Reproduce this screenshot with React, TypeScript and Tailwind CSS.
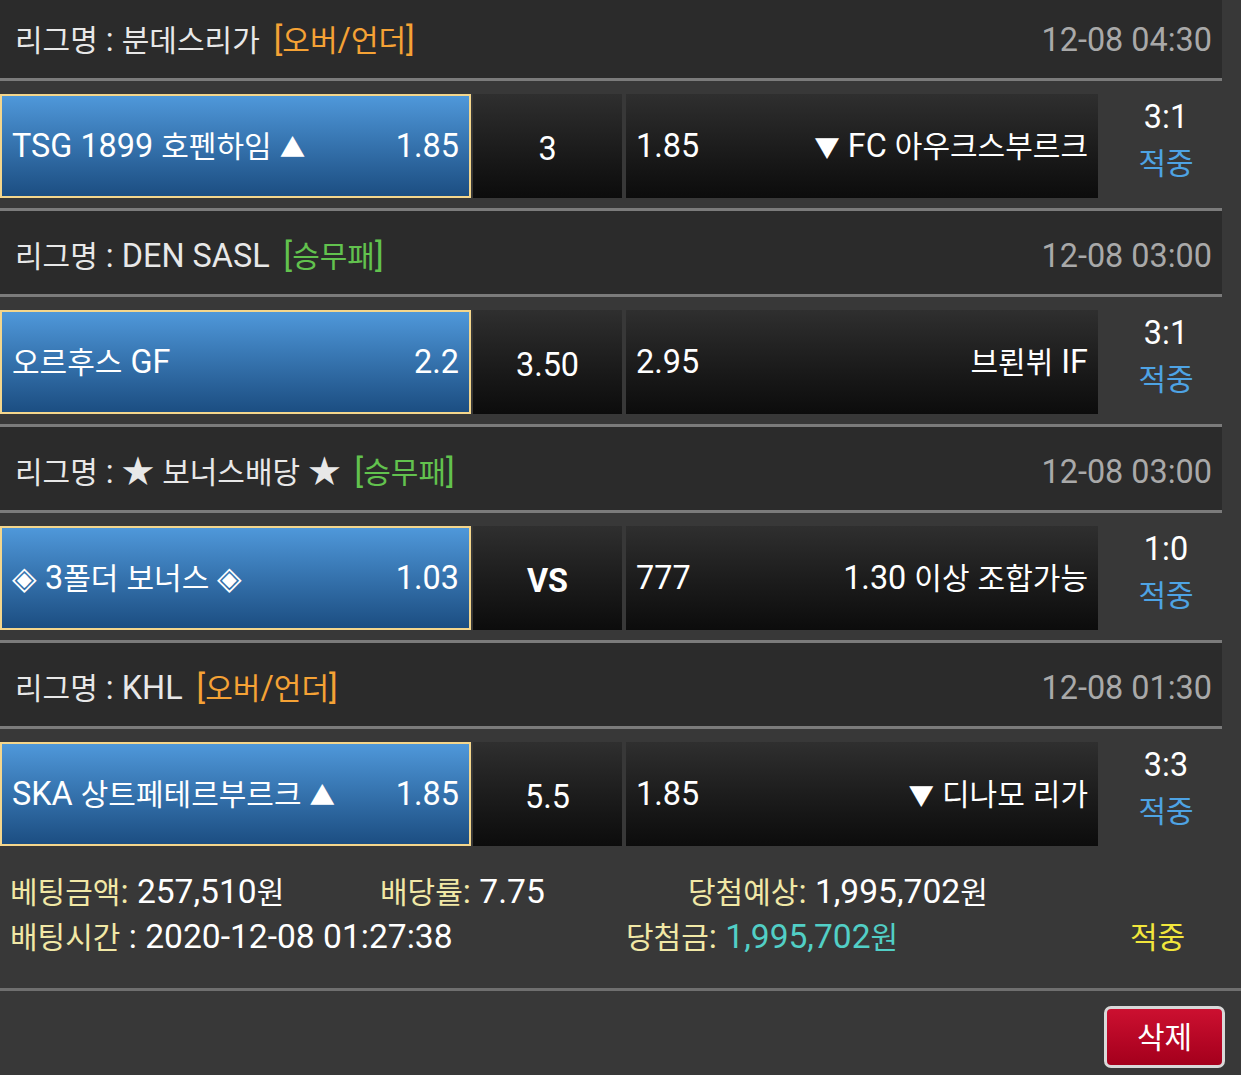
import React from 'react';

type Match = {
  league: string;
  tag: string;
  tagColor: 'orange' | 'green';
  time: string;
  home: string;
  homeOdds: string;
  center: string;
  centerBold?: boolean;
  awayOdds: string;
  away: string;
  score: string;
};

const MATCHES: Match[] = [
  {
    league: '분데스리가',
    tag: '[오버/언더]',
    tagColor: 'orange',
    time: '12-08 04:30',
    home: 'TSG 1899 호펜하임 ▲',
    homeOdds: '1.85',
    center: '3',
    awayOdds: '1.85',
    away: '▼ FC 아우크스부르크',
    score: '3:1',
  },
  {
    league: 'DEN SASL',
    tag: '[승무패]',
    tagColor: 'green',
    time: '12-08 03:00',
    home: '오르후스 GF',
    homeOdds: '2.2',
    center: '3.50',
    awayOdds: '2.95',
    away: '브뢴뷔 IF',
    score: '3:1',
  },
  {
    league: '★ 보너스배당 ★',
    tag: '[승무패]',
    tagColor: 'green',
    time: '12-08 03:00',
    home: '◈ 3폴더 보너스 ◈',
    homeOdds: '1.03',
    center: 'VS',
    centerBold: true,
    awayOdds: '777',
    away: '1.30 이상 조합가능',
    score: '1:0',
  },
  {
    league: 'KHL',
    tag: '[오버/언더]',
    tagColor: 'orange',
    time: '12-08 01:30',
    home: 'SKA 상트페테르부르크 ▲',
    homeOdds: '1.85',
    center: '5.5',
    awayOdds: '1.85',
    away: '▼ 디나모 리가',
    score: '3:3',
  },
];

const FONT = "font-['Roboto','Noto_Sans_CJK_KR',sans-serif]";

// latin runs are drawn a bit larger than hangul, as in the original screen
const T: React.FC<{ s: string; big?: boolean }> = ({ s, big }) => (
  <>
    {s.split(/([\uAC00-\uD7A3]+|[▲▼])/).map((part, i) => {
      if (!part) return null;
      if (/[\uAC00-\uD7A3]/.test(part)) return <span key={i}>{part}</span>;
      if (part === '▲' || part === '▼') return <span key={i} className="text-[0.85em]">{part}</span>;
      return (
        <span key={i} className={big ? 'text-[1.12em]' : 'text-[1.08em]'}>
          {part}
        </span>
      );
    })}
  </>
);

const MatchBlock: React.FC<{ m: Match; first: boolean }> = ({ m, first }) => (
  <div>
    {!first && <div className="h-[3px] w-[1222px] bg-[#7b7b7b]" />}
    <div
      className={
        'flex w-[1222px] items-center justify-between bg-[#2b2b2b] pl-[15px] pr-[10px] text-[30px] ' +
        (first ? 'h-[78px] pt-[2px]' : 'h-[83px] pt-[7px]')
      }
    >
      <div className="flex items-center text-[#e8e8e8]">
        <span>
          <T s={`리그명 :\u00a0${m.league}`} />
        </span>
        <span className={'ml-[14px] ' + (m.tagColor === 'orange' ? 'text-[#f5a235]' : 'text-[#62c24e]')}>
          <T s={m.tag} />
        </span>
      </div>
      <span className="text-[#a9a9a9]">
        <T s={m.time} />
      </span>
    </div>
    <div className="h-[3px] w-[1222px] bg-[#7b7b7b]" />
    <div className="flex pb-[10px] pt-[13px]">
      <div className="flex h-[104px] w-[471px] items-center justify-between border-2 border-[#f4d68c] bg-gradient-to-b from-[#4f98da] to-[#1c4e82] px-[10px] text-[30px] text-white">
        <span>
          <T s={m.home} />
        </span>
        <span>
          <T s={m.homeOdds} />
        </span>
      </div>
      <div
        className={
          'ml-[2px] flex h-[104px] w-[149px] items-center justify-center bg-gradient-to-b from-[#2f2f2f] to-[#0c0c0c] pt-[6px] text-[30px] text-white ' +
          (m.centerBold ? 'font-bold' : '')
        }
      >
        <T s={m.center} />
      </div>
      <div className="ml-[4px] flex h-[104px] w-[472px] items-center justify-between bg-gradient-to-b from-[#2f2f2f] to-[#0c0c0c] pl-[10px] pr-[10px] text-[30px] text-white">
        <span>
          <T s={m.awayOdds} />
        </span>
        <span>
          <T s={m.away} />
        </span>
      </div>
      <div className="flex w-[124px] flex-col items-center pl-[12px] text-[30px] leading-[46px]">
        <span className="text-white">
          <T s={m.score} />
        </span>
        <span className="text-[#4ea3e4]">적중</span>
      </div>
    </div>
  </div>
);

const App: React.FC = () => {
  return (
    <div className={'min-h-screen w-full bg-[#383838] ' + FONT}>
      {MATCHES.map((m, i) => (
        <MatchBlock key={i} m={m} first={i === 0} />
      ))}

      {/* betting summary */}
      <div className="pb-[28px] pt-[14px] text-[30px]">
        <div className="flex h-[45px] items-center">
          <div className="w-[380px] pl-[10px]">
            <span className="text-[#f1e8a6]">
              <T s="베팅금액:" big />
            </span>
            <span className="text-white">
              <T s=" 257,510원" big />
            </span>
          </div>
          <div className="w-[308px]">
            <span className="text-[#f1e8a6]">
              <T s="배당률:" big />
            </span>
            <span className="text-white">
              <T s=" 7.75" big />
            </span>
          </div>
          <div>
            <span className="text-[#f1e8a6]">
              <T s="당첨예상:" big />
            </span>
            <span className="text-white">
              <T s=" 1,995,702원" big />
            </span>
          </div>
        </div>
        <div className="flex h-[45px] items-center">
          <div className="w-[626px] pl-[10px]">
            <span className="text-[#f1e8a6]">배팅시간</span>
            <span className="text-white">
              <T s=" : 2020-12-08 01:27:38" big />
            </span>
          </div>
          <div className="w-[504px]">
            <span className="text-[#f1e8a6]">
              <T s="당첨금:" big />
            </span>
            <span className="text-[#52cfc6]">
              <T s=" 1,995,702원" big />
            </span>
          </div>
          <div className="text-[#f2e63c]">적중</div>
        </div>
      </div>
      <div className="h-[3px] w-full bg-[#6f6f6f]" />
      <div className="flex justify-end pb-[7px] pr-[16px] pt-[15px]">
        <button className="flex h-[62px] w-[121px] items-center justify-center rounded-[7px] border-[3px] border-[#d9d9d9] bg-gradient-to-b from-[#cc1030] to-[#a4001c] text-[30px] text-white">
          삭제
        </button>
      </div>
    </div>
  );
};

export default App;
